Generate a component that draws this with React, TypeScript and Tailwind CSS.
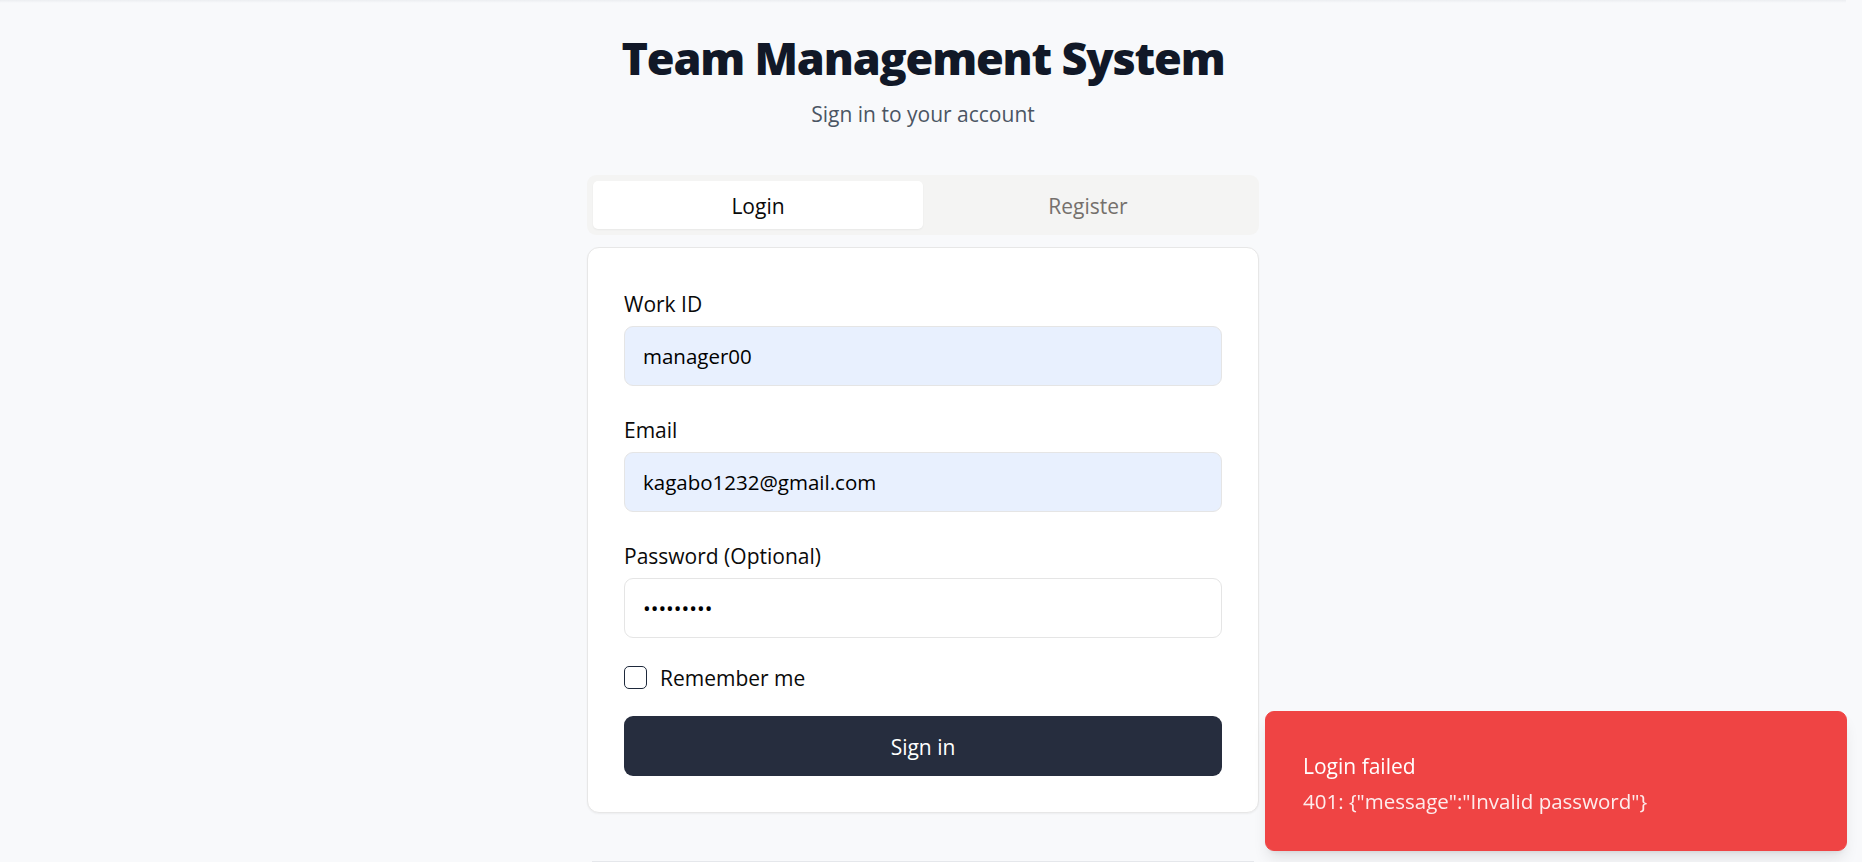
import { useState } from 'react';

const font = { fontFamily: '"Open Sans", "Noto Sans", sans-serif' };

type Field = {
  id: string;
  label: string;
  type: string;
  value: string;
  autofilled?: boolean;
};

const fields: Field[] = [
  { id: 'workId', label: 'Work ID', type: 'text', value: 'manager00', autofilled: true },
  { id: 'email', label: 'Email', type: 'email', value: 'kagabo1232@gmail.com', autofilled: true },
  { id: 'password', label: 'Password (Optional)', type: 'password', value: 'password1' },
];

export default function App() {
  const [tab, setTab] = useState<'login' | 'register'>('login');
  const [remember, setRemember] = useState(false);

  return (
    <main
      className="min-h-screen bg-[#f8f9fb] pr-4 text-[#0a0a0a]"
      style={font}
    >
      <div className="h-[3px] bg-gradient-to-b from-[#eceef1] to-[#f8f9fb]" />
      <div className="mx-auto w-[672px] pt-[28px]">
        <header className="text-center">
          <h1 className="text-[45px] font-extrabold leading-[54px] tracking-[-1.2px] text-[#111827]">
            Team Management System
          </h1>
          <p className="mt-[14px] text-[21px] leading-[30px] text-[#4b5563]">
            Sign in to your account
          </p>
        </header>

        <div className="mt-[46px] grid h-[60px] grid-cols-2 rounded-[9px] bg-[#f4f4f3] p-[6px]">
          <button
            type="button"
            onClick={() => setTab('login')}
            className={`flex items-center justify-center rounded-[5px] pt-[4px] text-[21px] font-medium ${
              tab === 'login'
                ? 'bg-white text-[#0a0a0a] shadow-[0_1px_2px_rgba(0,0,0,0.05)]'
                : 'text-[#75706c]'
            }`}
          >
            Login
          </button>
          <button
            type="button"
            onClick={() => setTab('register')}
            className={`flex items-center justify-center rounded-[5px] pt-[4px] text-[21px] font-medium ${
              tab === 'register'
                ? 'bg-white text-[#0a0a0a] shadow-[0_1px_2px_rgba(0,0,0,0.05)]'
                : 'text-[#75706c]'
            }`}
          >
            Register
          </button>
        </div>

        <section className="mt-[12px] rounded-[12px] border border-[#e7e7e7] bg-white px-[36px] pb-[36px] pt-[46px] shadow-[0_1px_2px_rgba(0,0,0,0.05)]">
          <form className="flex flex-col" onSubmit={(event) => event.preventDefault()}>
            {fields.map((field, index) => (
              <div key={field.id} className={index === 0 ? '' : 'mt-[34px]'}>
                <label
                  htmlFor={field.id}
                  className="block text-[21px] font-medium leading-none"
                >
                  {field.label}
                </label>
                <input
                  id={field.id}
                  type={field.type}
                  defaultValue={field.value}
                  className={`mt-[11px] block h-[60px] w-full rounded-[9px] border border-[#e5e5e5] px-[18px] text-[20.5px] text-black outline-none ${
                    field.autofilled ? 'bg-[#e8f0fe]' : 'bg-white'
                  }`}
                />
              </div>
            ))}

            <label className="mt-[28px] flex items-center gap-[13px]">
              <span
                onClick={() => setRemember(!remember)}
                className="flex h-[23px] w-[23px] items-center justify-center rounded-[5px] border-[1.5px] border-[#1e293b] bg-white"
              >
                {remember && (
                  <svg viewBox="0 0 24 24" className="h-4 w-4" fill="none" stroke="#1e293b" strokeWidth="3">
                    <path d="M5 12l5 5L20 7" />
                  </svg>
                )}
              </span>
              <span className="pt-[2px] text-[21px] font-medium leading-none">Remember me</span>
            </label>

            <button
              type="submit"
              className="mt-[27px] h-[60px] w-full rounded-[9px] bg-[#262d3e] pt-[3px] text-[21px] font-medium text-white"
            >
              Sign in
            </button>
          </form>
        </section>

        <div className="mx-[5px] mt-[48px] border-t border-[#e5e7eb]" />
      </div>

      <div className="fixed bottom-[11px] right-[15px] w-[582px] rounded-[9px] border border-[#ef4444] bg-[#ef4444] pb-[34px] pl-[37px] pr-[48px] pt-[39px] text-white shadow-[0_10px_15px_-3px_rgba(0,0,0,0.1),0_4px_6px_-4px_rgba(0,0,0,0.1)]">
        <p className="text-[21px] font-medium leading-[30px]">Login failed</p>
        <p className="mt-[5px] text-[20.5px] leading-[30px] text-white/90">
          401: {'{"message":"Invalid password"}'}
        </p>
      </div>
    </main>
  );
}
